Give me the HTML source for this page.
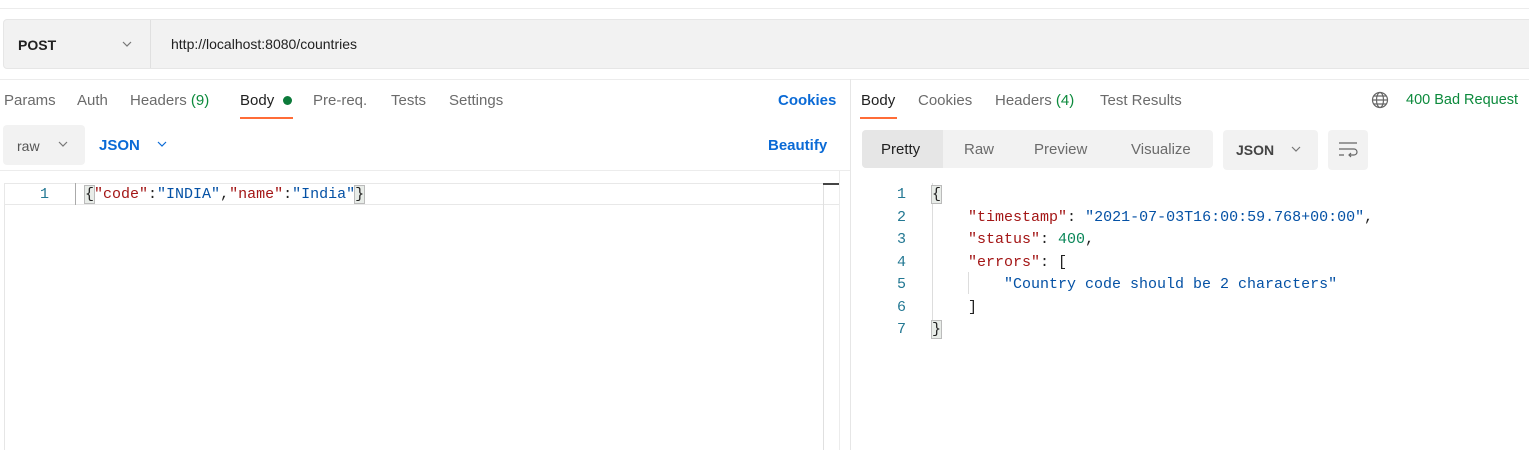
<!DOCTYPE html>
<html><head><meta charset="utf-8"><style>
*{margin:0;padding:0;box-sizing:border-box}
body{width:1529px;height:450px;background:#fff;position:relative;overflow:hidden;font-family:"Liberation Sans",sans-serif;font-size:15px;color:#6b6b6b}
.a{position:absolute;white-space:pre}
.mono{font-family:"Liberation Mono",monospace;font-size:15px}
.k{color:#a31515}.s{color:#0451a5}.n{color:#098658}.p{color:#222}
.ln{color:#237893}
</style></head><body>
<div class="a" style="left:0;top:8px;width:1529px;height:1px;background:#ececec"></div>
<div class="a" style="left:3px;top:19px;width:1530px;height:50px;background:#f2f2f2;border:1px solid #e6e6e6;border-radius:4px"></div>
<div class="a" style="left:150px;top:20px;width:1px;height:48px;background:#e0e0e0"></div>
<div class="a" style="left:18px;top:37px;color:#212121;font-weight:bold;font-size:14px">POST</div>
<svg class="a" style="left:121px;top:39px" width="12" height="10"><path d="M2 3l4 4 4-4" stroke="#777" fill="none" stroke-width="1.2"/></svg>
<div class="a" style="left:171px;top:36px;color:#212121;font-size:14px">http://localhost:8080/countries</div>
<div class="a" style="left:0;top:79px;width:1529px;height:1px;background:#ececec"></div>
<div class="a" style="left:850px;top:79px;width:1px;height:371px;background:#e6e6e6"></div>

<div class="a" style="left:4px;top:92px">Params</div>
<div class="a" style="left:77px;top:92px">Auth</div>
<div class="a" style="left:130px;top:92px">Headers <span style="color:#0c8a3c">(9)</span></div>
<div class="a" style="left:240px;top:92px;color:#212121">Body</div>
<div class="a" style="left:283px;top:96px;width:9px;height:9px;border-radius:50%;background:#0c7a3a"></div>
<div class="a" style="left:240px;top:117px;width:53px;height:2px;background:#ff6c37"></div>
<div class="a" style="left:313px;top:92px">Pre-req.</div>
<div class="a" style="left:391px;top:92px">Tests</div>
<div class="a" style="left:449px;top:92px">Settings</div>
<div class="a" style="left:778px;top:92px;color:#0a6ad6;font-weight:bold">Cookies</div>

<div class="a" style="left:3px;top:125px;width:82px;height:40px;background:#f2f2f2;border-radius:4px"></div>
<div class="a" style="left:17px;top:138px;color:#555;font-size:14px">raw</div>
<svg class="a" style="left:57px;top:139px" width="12" height="10"><path d="M2 3l4 4 4-4" stroke="#777" fill="none" stroke-width="1.2"/></svg>
<div class="a" style="left:99px;top:137px;color:#0a6ad6;font-weight:bold">JSON</div>
<svg class="a" style="left:156px;top:139px" width="12" height="10"><path d="M2 3l4 4 4-4" stroke="#0a6ad6" fill="none" stroke-width="1.2"/></svg>
<div class="a" style="left:768px;top:137px;color:#0a6ad6;font-weight:bold">Beautify</div>
<div class="a" style="left:0;top:170px;width:850px;height:1px;background:#ececec"></div>

<div class="a" style="left:4px;top:183px;width:1px;height:267px;background:#e6e6e6"></div>
<div class="a" style="left:4px;top:183px;width:836px;height:22px;border:1px solid #e8e8e8;border-right:none"></div>
<div class="a" style="left:823px;top:183px;width:1px;height:267px;background:#e0e0e0"></div>
<div class="a" style="left:839px;top:170px;width:1px;height:280px;background:#ececec"></div>
<div class="a" style="left:823px;top:183px;width:16px;height:2px;background:#444"></div>
<div class="a" style="left:75px;top:183px;width:1px;height:22px;background:#aaa"></div>
<div class="a mono ln" style="left:40px;top:186px">1</div>
<div class="a mono p" style="left:85px;top:186px"><span style="background:#e8ece8;outline:1px solid #bbb">{</span><span class="k">"code"</span>:<span class="s">"INDIA"</span>,<span class="k">"name"</span>:<span class="s">"India"</span><span style="background:#e8ece8;outline:1px solid #bbb">}</span></div>

<div class="a" style="left:861px;top:92px;color:#212121">Body</div>
<div class="a" style="left:860px;top:117px;width:37px;height:2px;background:#ff6c37"></div>
<div class="a" style="left:918px;top:92px">Cookies</div>
<div class="a" style="left:995px;top:92px">Headers <span style="color:#0c8a3c">(4)</span></div>
<div class="a" style="left:1100px;top:92px">Test Results</div>
<svg class="a" style="left:1371px;top:91px" width="18" height="18" viewBox="0 0 18 18" fill="none" stroke="#666" stroke-width="1.2"><circle cx="9" cy="9" r="7.5"/><ellipse cx="9" cy="9" rx="3.5" ry="7.5"/><path d="M1.5 9h15M3 5h12M3 13h12"/></svg>
<div class="a" style="left:1406px;top:92px;color:#0c8a3c;font-size:14.5px">400 Bad Request</div>

<div class="a" style="left:862px;top:130px;width:351px;height:38px;background:#f2f2f2;border-radius:4px"></div>
<div class="a" style="left:862px;top:130px;width:81px;height:38px;background:#e6e6e6;border-radius:4px 0 0 4px"></div>
<div class="a" style="left:881px;top:141px;color:#212121">Pretty</div>
<div class="a" style="left:964px;top:141px">Raw</div>
<div class="a" style="left:1034px;top:141px">Preview</div>
<div class="a" style="left:1131px;top:141px">Visualize</div>
<div class="a" style="left:1223px;top:130px;width:95px;height:40px;background:#f2f2f2;border-radius:4px"></div>
<div class="a" style="left:1236px;top:142px;color:#444;font-weight:bold;font-size:14px">JSON</div>
<svg class="a" style="left:1290px;top:144px" width="12" height="10"><path d="M2 3l4 4 4-4" stroke="#777" fill="none" stroke-width="1.2"/></svg>
<div class="a" style="left:1328px;top:130px;width:40px;height:40px;background:#f2f2f2;border-radius:4px"></div>
<svg class="a" style="left:1338px;top:140px" width="20" height="20" viewBox="0 0 20 20" fill="none" stroke="#666" stroke-width="1.2"><path d="M1 3h18M1 9h15a3 3 0 0 1 0 6h-5M13 13l-2 2 2 2M1 15h5"/></svg>

<div class="a" style="left:932px;top:183px;width:1px;height:155px;background:#ddd"></div>
<div class="a" style="left:968px;top:272px;width:1px;height:22px;background:#ddd"></div>
<div class="a mono ln" style="left:897px;top:184px;line-height:22.5px">1
2
3
4
5
6
7</div>
<div class="a mono p" style="left:932px;top:184px;line-height:22.5px"><span style="background:#e8ece8;outline:1px solid #bbb">{</span>
    <span class="k">"timestamp"</span>: <span class="s">"2021-07-03T16:00:59.768+00:00"</span>,
    <span class="k">"status"</span>: <span class="n">400</span>,
    <span class="k">"errors"</span>: [
        <span class="s">"Country code should be 2 characters"</span>
    ]
<span style="background:#e8ece8;outline:1px solid #bbb">}</span></div>
</body></html>
